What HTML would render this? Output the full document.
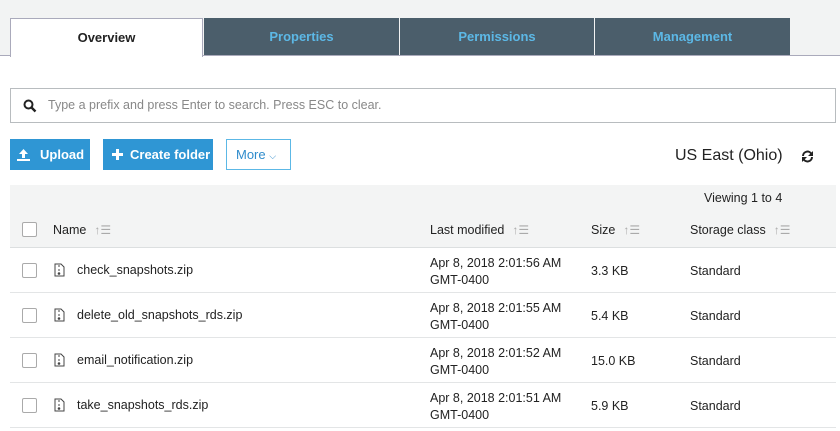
<!DOCTYPE html><html><head><style>
body{margin:0;width:840px;height:431px;overflow:hidden;background:#fff;font-family:"Liberation Sans",sans-serif;position:relative;color:#222}
.top{position:absolute;left:0;top:0;width:840px;height:55px;background:#f2f3f3;border-bottom:1px solid #aab}
.tab{position:absolute;top:18px;height:37px;background:#4b5e6b;color:#5cb8e6;font-weight:bold;font-size:13px;text-align:center;line-height:37px}
.ov{position:absolute;left:10px;top:18px;width:193px;height:39px;background:#fff;border:1px solid #aab;border-bottom:none;text-align:center;line-height:38px;font-weight:bold;font-size:13px;box-sizing:border-box}
.search{position:absolute;left:10px;top:88px;width:826px;height:35px;border:1px solid #b8bcbf;box-sizing:border-box;font-size:12.5px;color:#888;line-height:33px;padding-left:37px}
.btn{position:absolute;top:139px;height:31px;background:#2f96d4;color:#fff;font-weight:bold;font-size:13px;line-height:31px;box-sizing:border-box}
.a{position:absolute;font-size:12.5px;white-space:nowrap}
.cb{position:absolute;left:22px;width:13px;height:13px;border:1px solid #aaa;border-radius:2px;background:#fff}
.row{position:absolute;left:10px;width:826px;border-bottom:1px solid #e3e5e6}
.sort{color:#aaa;font-weight:normal;font-size:12px;margin-left:8px}
.fi{position:absolute;left:54px}
</style></head><body>
<div class="top"></div>
<div class="ov">Overview</div>
<div class="tab" style="left:204px;width:195px">Properties</div>
<div class="tab" style="left:400px;width:194px">Permissions</div>
<div class="tab" style="left:595px;width:195px">Management</div>
<div class="search">Type a prefix and press Enter to search. Press ESC to clear.
<svg style="position:absolute;left:12px;top:10px" width="14" height="14" viewBox="0 0 14 14"><circle cx="5.5" cy="5.5" r="4" fill="none" stroke="#222" stroke-width="2"/><path d="M8.5 8.5L12.5 12.5" stroke="#222" stroke-width="2.4"/></svg></div>
<div class="btn" style="left:10px;width:80px;padding-left:30px">Upload<svg style="position:absolute;left:7px;top:9px" width="13" height="13" viewBox="0 0 13 13"><path d="M6.5 1L2 6h3v4h3V6h3z M0 11h13v2H0z" fill="#fff"/></svg></div>
<div class="btn" style="left:103px;width:110px;padding-left:27px">Create folder<svg style="position:absolute;left:9px;top:10px" width="11" height="11" viewBox="0 0 11 11"><path d="M4 0h3v4h4v3H7v4H4V7H0V4h4z" fill="#fff"/></svg></div>
<div class="btn" style="left:226px;width:65px;background:#fff;border:1px solid #5cb8e6;color:#2f8ccc;padding-left:9px;line-height:29px;font-weight:normal">More <span style="font-size:9px">⌵</span></div>
<div class="a" style="left:675px;top:147px;font-size:16px">US East (Ohio)</div>
<svg style="position:absolute;left:801px;top:150px" width="13" height="13" viewBox="0 0 13 13"><path d="M2 6A4.5 4.5 0 0 1 10.5 4M11 7A4.5 4.5 0 0 1 2.5 9" fill="none" stroke="#222" stroke-width="2"/><path d="M12 1v5H7z M1 12V7h5z" fill="#222"/></svg>
<div style="position:absolute;left:10px;top:185px;width:826px;height:27px;background:#f3f4f4"></div>
<div class="a" style="left:704px;top:191px">Viewing 1 to 4</div>
<div class="row" style="top:212px;height:35px;background:#f3f4f4;border-bottom:1px solid #dcdfe0"></div>
<div class="cb" style="top:222px"></div>
<div class="a" style="left:53px;top:223px">Name<span class="sort">↑☰</span></div>
<div class="a" style="left:430px;top:223px">Last modified<span class="sort">↑☰</span></div>
<div class="a" style="left:591px;top:223px">Size<span class="sort">↑☰</span></div>
<div class="a" style="left:690px;top:223px">Storage class<span class="sort">↑☰</span></div>
<div class="row" style="top:248px;height:44px"></div>
<div class="row" style="top:293px;height:44px"></div>
<div class="row" style="top:338px;height:44px"></div>
<div class="row" style="top:383px;height:44px"></div>

<div class="cb" style="top:263px"></div><svg class="fi" style="top:263px" width="11" height="14" viewBox="0 0 11 14"><path d="M1 1h6l3 3v9H1z" fill="none" stroke="#444"/><path d="M5 2v2M5 6v2" stroke="#444"/><circle cx="5" cy="10.5" r="1.3" fill="#444"/></svg><div class="a" style="left:77px;top:263px">check_snapshots.zip</div><div class="a" style="left:430px;top:255px;line-height:17px">Apr 8, 2018 2:01:56 AM<br>GMT-0400</div><div class="a" style="left:591px;top:264px">3.3 KB</div><div class="a" style="left:690px;top:264px">Standard</div>
<div class="cb" style="top:308px"></div><svg class="fi" style="top:308px" width="11" height="14" viewBox="0 0 11 14"><path d="M1 1h6l3 3v9H1z" fill="none" stroke="#444"/><path d="M5 2v2M5 6v2" stroke="#444"/><circle cx="5" cy="10.5" r="1.3" fill="#444"/></svg><div class="a" style="left:77px;top:308px">delete_old_snapshots_rds.zip</div><div class="a" style="left:430px;top:300px;line-height:17px">Apr 8, 2018 2:01:55 AM<br>GMT-0400</div><div class="a" style="left:591px;top:309px">5.4 KB</div><div class="a" style="left:690px;top:309px">Standard</div>
<div class="cb" style="top:353px"></div><svg class="fi" style="top:353px" width="11" height="14" viewBox="0 0 11 14"><path d="M1 1h6l3 3v9H1z" fill="none" stroke="#444"/><path d="M5 2v2M5 6v2" stroke="#444"/><circle cx="5" cy="10.5" r="1.3" fill="#444"/></svg><div class="a" style="left:77px;top:353px">email_notification.zip</div><div class="a" style="left:430px;top:345px;line-height:17px">Apr 8, 2018 2:01:52 AM<br>GMT-0400</div><div class="a" style="left:591px;top:354px">15.0 KB</div><div class="a" style="left:690px;top:354px">Standard</div>
<div class="cb" style="top:398px"></div><svg class="fi" style="top:398px" width="11" height="14" viewBox="0 0 11 14"><path d="M1 1h6l3 3v9H1z" fill="none" stroke="#444"/><path d="M5 2v2M5 6v2" stroke="#444"/><circle cx="5" cy="10.5" r="1.3" fill="#444"/></svg><div class="a" style="left:77px;top:398px">take_snapshots_rds.zip</div><div class="a" style="left:430px;top:390px;line-height:17px">Apr 8, 2018 2:01:51 AM<br>GMT-0400</div><div class="a" style="left:591px;top:399px">5.9 KB</div><div class="a" style="left:690px;top:399px">Standard</div>
</body></html>
